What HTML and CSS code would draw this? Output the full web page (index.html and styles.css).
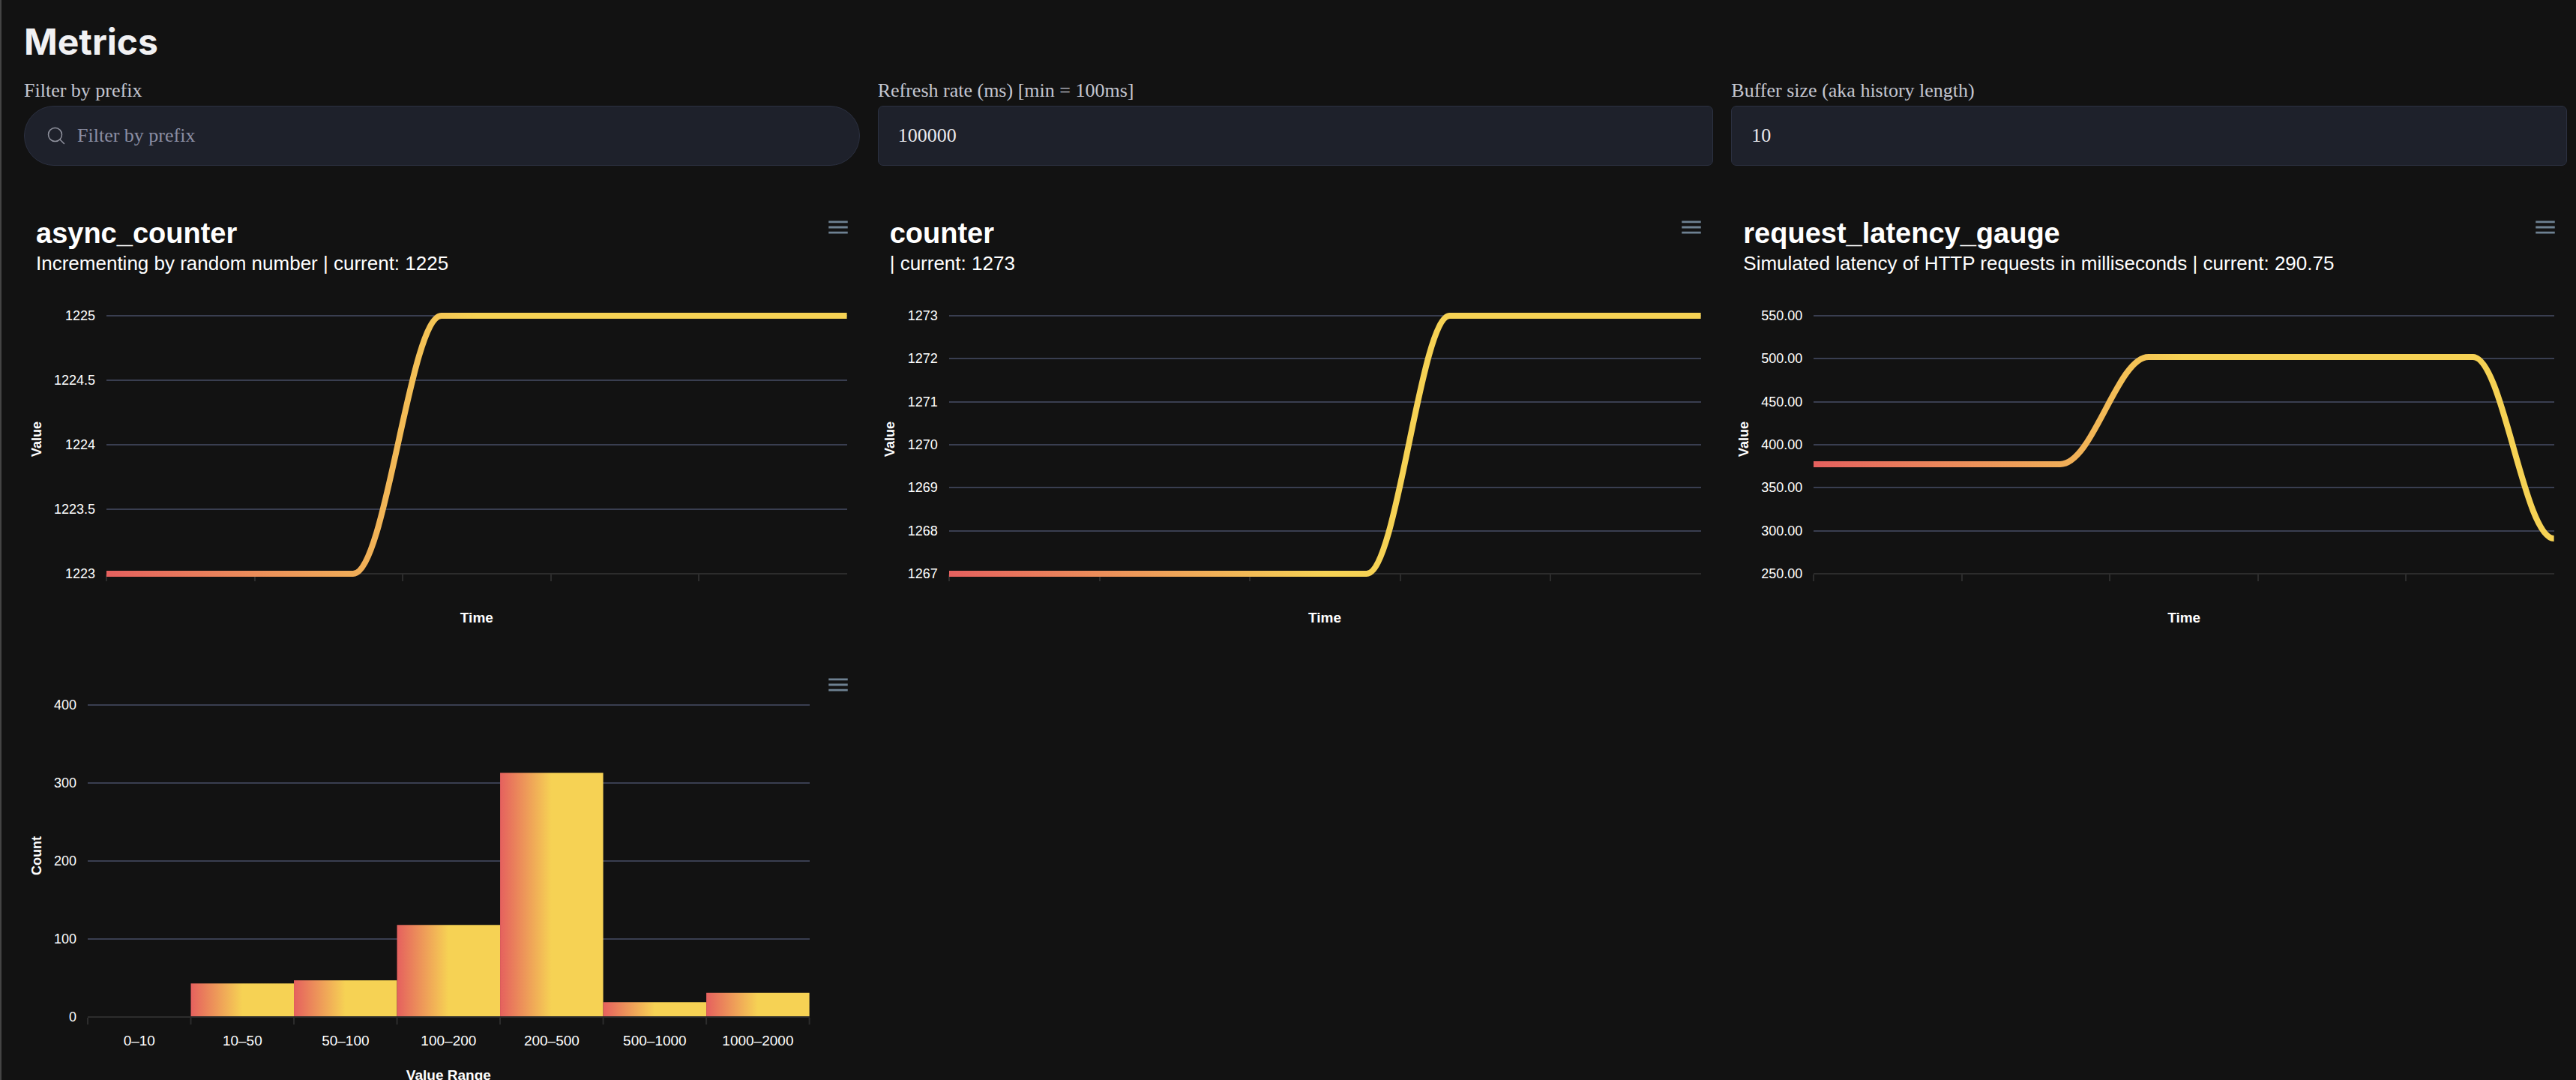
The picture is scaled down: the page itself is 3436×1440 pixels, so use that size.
FILE: index.html
```html
<!DOCTYPE html>
<html lang="en">
<head>
<meta charset="utf-8">
<meta name="viewport" content="width=device-width, initial-scale=1">
<title>Metrics</title>
<link rel="stylesheet" href="styles.css">
</head>
<body>
<svg class="defs" aria-hidden="true">
  <defs>
    <linearGradient id="heat" x1="0" y1="0" x2="1" y2="0">
      <stop offset="0" stop-color="#e5605e"/>
      <stop offset="0.5" stop-color="#f6d254"/>
      <stop offset="1" stop-color="#f6d254"/>
    </linearGradient>
    <symbol id="menu" viewBox="0 0 24 24">
      <path d="M3 18h18v-2H3v2zm0-5h18v-2H3v2zm0-7v2h18V6H3z"/>
    </symbol>
  </defs>
</svg>
<main class="page">
  <h1 class="page-title">Metrics</h1>

  <form class="controls">
    <div class="field">
      <label class="field-label" for="prefix">Filter by prefix</label>
      <div class="box box-search">
        <svg class="search-icon" viewBox="0 0 32 32" aria-hidden="true">
          <circle cx="14" cy="14" r="12"/>
          <path d="M23 23 30 30"/>
        </svg>
        <input class="box-input" id="prefix" type="text" placeholder="Filter by prefix">
      </div>
    </div>
    <div class="field">
      <label class="field-label" for="refresh">Refresh rate (ms) [min = 100ms]</label>
      <div class="box"><input class="box-input" id="refresh" type="text" inputmode="numeric" value="100000"></div>
    </div>
    <div class="field">
      <label class="field-label" for="buffer">Buffer size (aka history length)</label>
      <div class="box"><input class="box-input" id="buffer" type="text" inputmode="numeric" value="10"></div>
    </div>
  </form>

  <section class="charts">
    <article class="chart">
      <header class="chart-head">
        <div>
          <h2 class="chart-title">async_counter</h2>
          <p class="chart-sub">Incrementing by random number | current: 1225</p>
        </div>
        <button class="menu-button" type="button" aria-label="Chart menu"><svg class="menu-icon"><use href="#menu"/></svg></button>
      </header>
      <div class="chart-body">
        <div class="y-title"><span class="y-title-text">Value</span></div>
        <ul class="y-labels"><li>1225</li><li>1224.5</li><li>1224</li><li>1223.5</li><li>1223</li></ul>
        <svg class="plot plot-line">
          <g class="grid">
            <line x1="0" x2="100%" y1="0" y2="0"/><line x1="0" x2="100%" y1="86" y2="86"/><line x1="0" x2="100%" y1="172" y2="172"/><line x1="0" x2="100%" y1="258" y2="258"/>
          </g>
          <g class="axis">
            <line x1="0" x2="100%" y1="344" y2="344"/><line x1="0" x2="0" y1="345" y2="354"/><line x1="20%" x2="20%" y1="345" y2="354"/><line x1="40%" x2="40%" y1="345" y2="354"/><line x1="60%" x2="60%" y1="345" y2="354"/><line x1="80%" x2="80%" y1="345" y2="354"/>
          </g>
          <svg class="series" viewBox="0 0 988 344" preserveAspectRatio="none">
            <path d="M0 344H329C373 344 405 0 447 0H988"/>
          </svg>
        </svg>
        <p class="x-title">Time</p>
      </div>
    </article>

    <article class="chart">
      <header class="chart-head">
        <div>
          <h2 class="chart-title">counter</h2>
          <p class="chart-sub">| current: 1273</p>
        </div>
        <button class="menu-button" type="button" aria-label="Chart menu"><svg class="menu-icon"><use href="#menu"/></svg></button>
      </header>
      <div class="chart-body">
        <div class="y-title"><span class="y-title-text">Value</span></div>
        <ul class="y-labels"><li>1273</li><li>1272</li><li>1271</li><li>1270</li><li>1269</li><li>1268</li><li>1267</li></ul>
        <svg class="plot plot-line">
          <g class="grid">
            <line x1="0" x2="100%" y1="0" y2="0"/><line x1="0" x2="100%" y1="57" y2="57"/><line x1="0" x2="100%" y1="115" y2="115"/><line x1="0" x2="100%" y1="172" y2="172"/><line x1="0" x2="100%" y1="229" y2="229"/><line x1="0" x2="100%" y1="287" y2="287"/>
          </g>
          <g class="axis">
            <line x1="0" x2="100%" y1="344" y2="344"/><line x1="0" x2="0" y1="345" y2="354"/><line x1="20%" x2="20%" y1="345" y2="354"/><line x1="40%" x2="40%" y1="345" y2="354"/><line x1="60%" x2="60%" y1="345" y2="354"/><line x1="80%" x2="80%" y1="345" y2="354"/>
          </g>
          <svg class="series" viewBox="0 0 1003 344" preserveAspectRatio="none">
            <path d="M0 344H557C598 344 629 0 668 0H1003"/>
          </svg>
        </svg>
        <p class="x-title">Time</p>
      </div>
    </article>

    <article class="chart">
      <header class="chart-head">
        <div>
          <h2 class="chart-title">request_latency_gauge</h2>
          <p class="chart-sub">Simulated latency of HTTP requests in milliseconds | current: 290.75</p>
        </div>
        <button class="menu-button" type="button" aria-label="Chart menu"><svg class="menu-icon"><use href="#menu"/></svg></button>
      </header>
      <div class="chart-body">
        <div class="y-title"><span class="y-title-text">Value</span></div>
        <ul class="y-labels"><li>550.00</li><li>500.00</li><li>450.00</li><li>400.00</li><li>350.00</li><li>300.00</li><li>250.00</li></ul>
        <svg class="plot plot-line">
          <g class="grid">
            <line x1="0" x2="100%" y1="0" y2="0"/><line x1="0" x2="100%" y1="57" y2="57"/><line x1="0" x2="100%" y1="115" y2="115"/><line x1="0" x2="100%" y1="172" y2="172"/><line x1="0" x2="100%" y1="229" y2="229"/><line x1="0" x2="100%" y1="287" y2="287"/>
          </g>
          <g class="axis">
            <line x1="0" x2="100%" y1="344" y2="344"/><line x1="0" x2="0" y1="345" y2="354"/><line x1="20%" x2="20%" y1="345" y2="354"/><line x1="40%" x2="40%" y1="345" y2="354"/><line x1="60%" x2="60%" y1="345" y2="354"/><line x1="80%" x2="80%" y1="345" y2="354"/>
          </g>
          <svg class="series" viewBox="0 0 988 344" preserveAspectRatio="none">
            <path d="M0 198H329C373 198 405 55 447 55H880C920 55 948 297 988 297"/>
          </svg>
        </svg>
        <p class="x-title">Time</p>
      </div>
    </article>

    <article class="chart">
      <header class="chart-head chart-head-bare">
        <button class="menu-button" type="button" aria-label="Chart menu"><svg class="menu-icon"><use href="#menu"/></svg></button>
      </header>
      <div class="chart-body chart-body-bars">
        <div class="y-title"><span class="y-title-text">Count</span></div>
        <ul class="y-labels"><li>400</li><li>300</li><li>200</li><li>100</li><li>0</li></ul>
        <svg class="plot plot-bars">
          <g class="grid">
            <line x1="0" x2="100%" y1="0" y2="0"/><line x1="0" x2="100%" y1="104" y2="104"/><line x1="0" x2="100%" y1="208" y2="208"/><line x1="0" x2="100%" y1="312" y2="312"/>
          </g>
          <svg class="bars" viewBox="0 0 7 400" preserveAspectRatio="none">
            <rect x="1" y="357" width="1" height="43"/>
            <rect x="2" y="353" width="1" height="47"/>
            <rect x="3" y="282" width="1" height="118"/>
            <rect x="4" y="87" width="1" height="313"/>
            <rect x="5" y="381" width="1" height="19"/>
            <rect x="6" y="369" width="1" height="31"/>
          </svg>
          <g class="axis">
            <line x1="0" x2="100%" y1="416" y2="416"/>
          </g>
          <svg class="ticks" viewBox="0 0 7 416" preserveAspectRatio="none">
            <path d="M0 417V426M1 417V426M2 417V426M3 417V426M4 417V426M5 417V426M6 417V426M7 417V426"/>
          </svg>
        </svg>
        <ul class="x-labels"><li>0–10</li><li>10–50</li><li>50–100</li><li>100–200</li><li>200–500</li><li>500–1000</li><li>1000–2000</li></ul>
        <p class="x-title">Value Range</p>
      </div>
    </article>
  </section>
</main>
</body>
</html>
```
FILE: styles.css
```css
* {
  box-sizing: border-box;
}

body {
  margin: 0;
  height: 100vh;
  overflow: hidden;
  background: #121212;
  border-left: 2px solid #444;
  color: #fff;
  font-family: "Liberation Sans", Arial, sans-serif;
}

h1, h2, p, ul {
  margin: 0;
  padding: 0;
}

ul {
  list-style: none;
}

.defs {
  position: absolute;
  width: 0;
  height: 0;
}

.page {
  padding: 26px 12px 0 30px;
}

.page-title {
  font-family: Inter, sans-serif;
  font-size: 48px;
  line-height: 60px;
  font-weight: 700;
  color: #f1f1f3;
}

/* Controls */
.controls {
  display: grid;
  grid-template-columns: repeat(3, 1fr);
  gap: 24px;
  margin-top: 19px;
  font-family: "Liberation Serif", "Times New Roman", serif;
}

.field {
  display: flex;
  flex-direction: column;
  gap: 4px;
}

.field-label {
  font-size: 26px;
  line-height: 32px;
  color: #c4c6d0;
}

.box {
  display: flex;
  align-items: center;
  gap: 16px;
  height: 80px;
  padding: 0 26px;
  background: #1e212b;
  border: 1px solid #2b3040;
  border-radius: 7px;
}

.box-search {
  border-radius: 40px;
  padding: 0 30px;
}

.search-icon {
  width: 24px;
  height: 24px;
  fill: none;
  stroke: #8f919d;
  stroke-width: 2;
  stroke-linecap: round;
}

.box-input {
  flex: 1;
  min-width: 0;
  padding: 0;
  border: 0;
  outline: 0;
  background: none;
  color: #e9e9ee;
  font: inherit;
  font-size: 26px;
}

.box-input::placeholder {
  color: #8b8ea3;
  opacity: 1;
}

/* Charts */
.charts {
  display: grid;
  grid-template-columns: repeat(3, 1fr);
  column-gap: 24px;
  margin-top: 65px;
}

.chart {
  padding-bottom: 60px;
  min-width: 0;
}

.chart-head {
  display: flex;
  justify-content: space-between;
  align-items: flex-start;
  padding: 0 12px 0 16px;
  margin-bottom: 55px;
}

.chart-head-bare {
  justify-content: flex-end;
  margin-bottom: 10px;
}

.chart-title {
  font-size: 38px;
  line-height: 50px;
  font-weight: 700;
}

.chart-sub {
  font-size: 26px;
  line-height: 30px;
}

.menu-button {
  width: 34px;
  height: 34px;
  padding: 0;
  border: 0;
  background: none;
}

.menu-icon {
  display: block;
  width: 34px;
  height: 34px;
  fill: #6e8192;
}

.chart-body {
  display: grid;
  grid-template-columns: 17px auto 1fr;
  column-gap: 15px;
  padding: 0 17px 0 8px;
}

.chart-body-bars {
  padding-right: 67px;
}

.y-title {
  display: flex;
  align-items: center;
  justify-content: center;
  padding-bottom: 14px;
}

.y-title-text {
  writing-mode: vertical-rl;
  transform: rotate(180deg);
  font-size: 18px;
  line-height: 18px;
  font-weight: 700;
}

.y-labels {
  display: flex;
  flex-direction: column;
  justify-content: space-between;
  margin: -10px 0;
  text-align: right;
  font-size: 18px;
  line-height: 20px;
}

.plot {
  display: block;
  width: 100%;
  overflow: visible;
}

.plot-line {
  height: 344px;
}

.plot-bars {
  height: 416px;
}

.series,
.bars,
.ticks {
  overflow: visible;
}

.grid line {
  stroke: #393e50;
  stroke-width: 2;
  shape-rendering: crispEdges;
}

.axis line {
  stroke: #2c2c2c;
  stroke-width: 2;
  shape-rendering: crispEdges;
}

.ticks path {
  fill: none;
  stroke: #2c2c2c;
  stroke-width: 2;
  vector-effect: non-scaling-stroke;
}

.series path {
  fill: none;
  stroke: url(#heat);
  stroke-width: 8;
}

.bars rect {
  fill: url(#heat);
}

.x-labels {
  grid-column: 3;
  display: grid;
  grid-template-columns: repeat(7, 1fr);
  margin-top: 20px;
  text-align: center;
  font-size: 19px;
  line-height: 24px;
}

.x-title {
  grid-column: 3;
  margin-top: 47px;
  text-align: center;
  font-size: 19px;
  line-height: 24px;
  font-weight: 700;
}

.x-labels + .x-title {
  margin-top: 22px;
}
```
